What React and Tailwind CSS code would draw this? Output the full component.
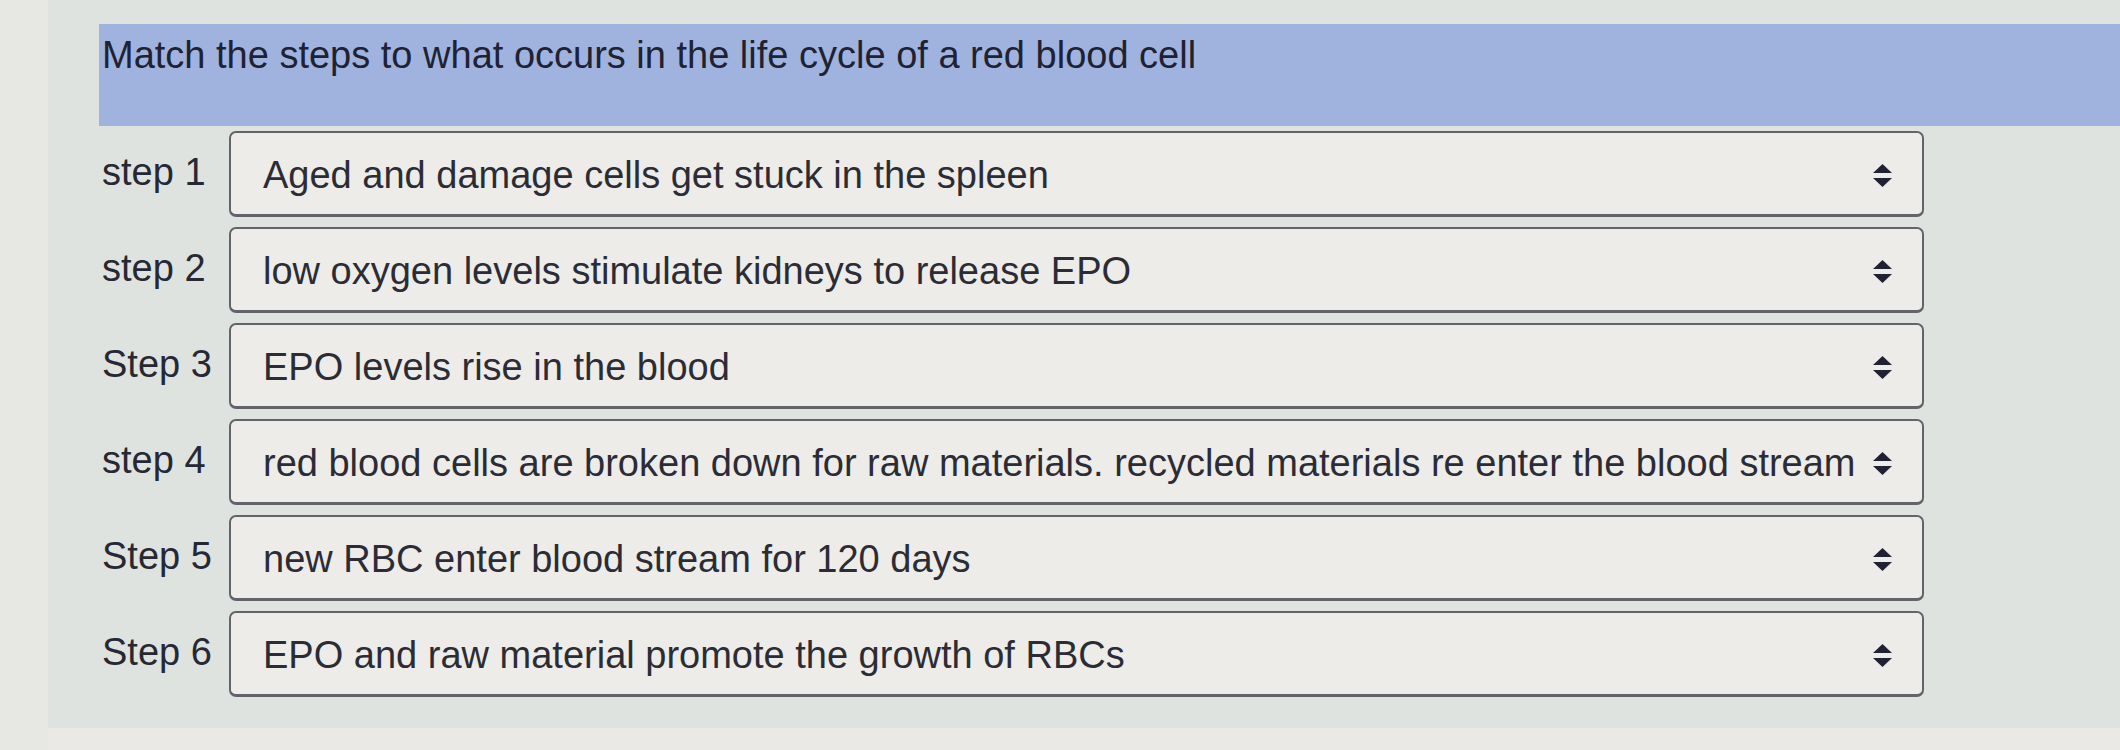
import React from 'react';

const steps = [
    { label: 'step 1', answer: 'Aged and damage cells get stuck in the spleen' },
    { label: 'step 2', answer: 'low oxygen levels stimulate kidneys to release EPO' },
    { label: 'Step 3', answer: 'EPO levels rise in the blood' },
    { label: 'step 4', answer: 'red blood cells are broken down for raw materials. recycled materials re enter the blood stream' },
    { label: 'Step 5', answer: 'new RBC enter blood stream for 120 days' },
    { label: 'Step 6', answer: 'EPO and raw material promote the growth of RBCs' },
];

// up/down arrows shown at the right edge of a select
function SelectArrows() {
    return (
        <svg width="19" height="23" viewBox="0 0 19 23" className="shrink-0">
            <path d="M9.5 0 L19 9 L0 9 Z" fill="#1f2231" />
            <path d="M0 14 L19 14 L9.5 23 Z" fill="#1f2231" />
        </svg>
    );
}

function StepRow({ label, answer }) {
    return (
        <div className="flex items-center h-[86px]">
            <div className="w-[130px] shrink-0 pl-[3px] pb-[4px] text-[38px] text-[#262833]">{label}</div>
            <div className="w-[1695px] h-full flex items-center justify-between pl-[32px] pr-[30px] pt-[4px] rounded-[7px] border-2 border-b-[3px] border-[#62646c] bg-[#edece8]">
                <span className="text-[38px] text-[#2b2c36] whitespace-nowrap">{answer}</span>
                <SelectArrows />
            </div>
        </div>
    );
}

export default function App() {
    return (
        <div className="w-[2120px] h-[750px] flex bg-[#e7e7e3] overflow-hidden" style={{ fontFamily: '"Liberation Sans", Arial, sans-serif' }}>
            <div className="w-[48px] shrink-0" />
            <div className="flex-1 flex flex-col">
                <div className="flex-1 bg-[#dee3e0] pt-[24px] pl-[51px]">
                    {/* question prompt */}
                    <div className="h-[102px] bg-[#a0b3de] pl-[3px] pt-[11px] text-[38px] leading-[40px] text-[#1e2233]">
                        Match the steps to what occurs in the life cycle of a red blood cell
                    </div>
                    <div className="mt-[5px] flex flex-col gap-[10px]">
                        {steps.map((s) => (
                            <StepRow key={s.label} label={s.label} answer={s.answer} />
                        ))}
                    </div>
                </div>
                <div className="h-[22px] bg-[#eae9e5]" />
            </div>
        </div>
    );
}
